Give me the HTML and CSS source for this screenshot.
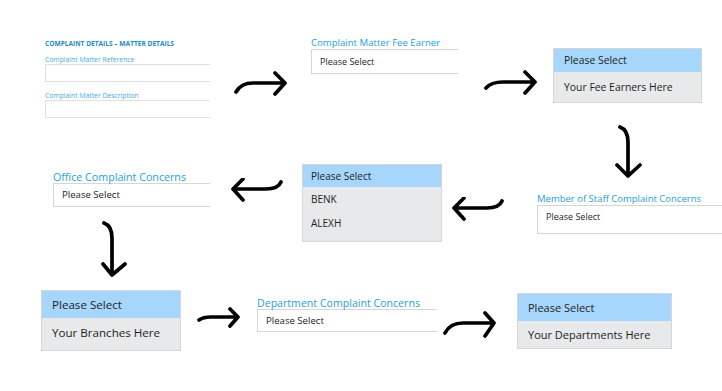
FILE: index.html
```html
<!DOCTYPE html>
<html lang="en">
<head>
  <meta charset="UTF-8" />
  <title>Complaint Concerns Flow</title>
  <link rel="stylesheet" href="styles.css">
</head>
<body>
  <div class="canvas">

    <!-- step 1: matter details -->
    <div class="node matter">
      <div class="matter-title">COMPLAINT DETAILS – MATTER DETAILS</div>
      <div class="matter-label">Complaint Matter Reference</div>
      <div class="matter-box"></div>
      <div class="matter-label">Complaint Matter Description</div>
      <div class="matter-box"></div>
    </div>

    <svg class="arrow a1" width="56" height="28" viewBox="0 0 56 28">
      <path d="M3 22 Q8 13 20 13 L52 13 M42 3 L52 13 L42 24" />
    </svg>

    <div class="node field fee">
      <div class="field-label">Complaint Matter Fee Earner</div>
      <div class="field-box">Please Select</div>
    </div>

    <svg class="arrow a2" width="56" height="28" viewBox="0 0 56 28">
      <path d="M3 19 Q8 13 20 13 L52 13 M42 3 L52 13 L42 24" />
    </svg>

    <div class="node dropdown drop-fee">
      <div class="opt selected">Please Select</div>
      <div class="opt">Your Fee Earners Here</div>
    </div>

    <svg class="arrow a3" width="30" height="58" viewBox="0 0 30 58">
      <path d="M5 3 Q13 6 13 18 L13 52 M2 41 L13 52 L25 41" />
    </svg>

    <!-- step 2: staff -->
    <div class="node field staff">
      <div class="field-label">Member of Staff Complaint Concerns</div>
      <div class="field-box">Please Select</div>
    </div>

    <svg class="arrow a4" width="54" height="26" viewBox="0 0 54 26">
      <path d="M51 4 Q48 11 36 11 L3 11 M13 1 L3 11 L13 22" />
    </svg>

    <div class="node dropdown drop-staff">
      <div class="opt selected">Please Select</div>
      <div class="opt">BENK</div>
      <div class="opt">ALEXH</div>
    </div>

    <svg class="arrow a5" width="54" height="26" viewBox="0 0 54 26">
      <path d="M51 4 Q48 11 36 11 L3 11 M13 1 L3 11 L13 22" />
    </svg>

    <div class="node field office">
      <div class="field-label">Office Complaint Concerns</div>
      <div class="field-box">Please Select</div>
    </div>

    <svg class="arrow a6" width="30" height="58" viewBox="0 0 30 58">
      <path d="M4 2 Q12 5 12 17 L12 54 M3 43 L12 54 L25 43" />
    </svg>

    <!-- step 3: branches and departments -->
    <div class="node dropdown drop-branch">
      <div class="opt selected">Please Select</div>
      <div class="opt">Your Branches Here</div>
    </div>

    <svg class="arrow a7" width="46" height="22" viewBox="0 0 46 22">
      <path d="M2 13 Q6 10 14 10 L41 10 M33 2 L41 10 L33 19" />
    </svg>

    <div class="node field dept">
      <div class="field-label">Department Complaint Concerns</div>
      <div class="field-box">Please Select</div>
    </div>

    <svg class="arrow a8" width="56" height="28" viewBox="0 0 56 28">
      <path d="M2 22 Q7 12 20 12 L51 12 M42 2 L51 12 L42 25" />
    </svg>

    <div class="node dropdown drop-dept">
      <div class="opt selected">Please Select</div>
      <div class="opt">Your Departments Here</div>
    </div>

  </div>
</body>
</html>
```

FILE: styles.css
```css
body {
  margin: 0;
  background: #fff;
  font-family: 'Open Sans', 'Noto Sans', sans-serif;
}
.canvas {
  position: relative;
  width: 722px;
  height: 391px;
  overflow: hidden;
}
.node, .arrow {
  position: absolute;
}

/* arrows */
.arrow path {
  fill: none;
  stroke: #000;
  stroke-width: 3.7;
  stroke-linecap: round;
  stroke-linejoin: round;
}
.a1 { left: 233px; top: 70px; }
.a2 { left: 483px; top: 69px; }
.a3 { left: 615px; top: 124px; }
.a4 { left: 451px; top: 197px; }
.a5 { left: 230px; top: 178px; }
.a6 { left: 100px; top: 221px; }
.a7 { left: 197px; top: 307px; }
.a8 { left: 443px; top: 311px; }

/* matter details panel */
.matter {
  left: 45px;
  top: 39px;
  width: 165px;
}
.matter-title {
  font-size: 6.6px;
  font-weight: 700;
  color: #1a8cc9;
  line-height: 10px;
  margin-bottom: 7px;
}
.matter-label {
  font-size: 6.8px;
  color: #46abdc;
  line-height: 8px;
}
.matter-box {
  height: 16px;
  border: 1px solid #e0e0e0;
  border-right: none;
  margin-bottom: 10px;
}

/* labelled select fields */
.field-label {
  color: #27a0db;
  line-height: 12px;
}
.field-box {
  box-sizing: border-box;
  border: 1px solid #d6d6d6;
  border-right: none;
  color: #1e1e1e;
  padding-left: 8px;
}
.fee {
  left: 311px;
  top: 37px;
  width: 147px;
  font-size: 9.6px;
}
.fee .field-box {
  height: 25px;
  line-height: 23px;
  font-size: 9px;
}
.staff {
  left: 537px;
  top: 193px;
  width: 190px;
  font-size: 9.5px;
}
.staff .field-box {
  height: 29px;
  line-height: 17px;
  padding-top: 2px;
  font-size: 9px;
}
.office {
  left: 53px;
  top: 171px;
  width: 157px;
  font-size: 10.7px;
}
.office .field-box {
  height: 24px;
  line-height: 22px;
  font-size: 9.6px;
}
.dept {
  left: 257px;
  top: 297px;
  width: 180px;
  font-size: 10.6px;
}
.dept .field-box {
  height: 23px;
  line-height: 21px;
  font-size: 9.6px;
}

/* opened dropdown lists */
.dropdown {
  box-sizing: border-box;
  border: 1px solid #d6d6d6;
  background: #e8e9ea;
  color: #1e1e1e;
}
.opt {
  padding-left: 10px;
}
.opt.selected {
  background: #a6d6fb;
}
.drop-fee {
  left: 553px;
  top: 48px;
  width: 149px;
  height: 55px;
  font-size: 10.4px;
}
.drop-fee .opt { line-height: 23px; }
.drop-fee .opt + .opt { line-height: 30px; }

.drop-staff {
  left: 302px;
  top: 164px;
  width: 140px;
  height: 78px;
  font-size: 10px;
}
.drop-staff .opt { line-height: 24px; padding-left: 8px; }
.drop-staff .opt.selected { line-height: 22px; }

.drop-branch {
  left: 41px;
  top: 290px;
  width: 140px;
  height: 61px;
  font-size: 11.6px;
}
.drop-branch .opt { line-height: 27px; }
.drop-branch .opt + .opt { line-height: 30px; }

.drop-dept {
  left: 517px;
  top: 293px;
  width: 155px;
  height: 56px;
  font-size: 11px;
}
.drop-dept .opt { line-height: 27px; }
.drop-dept .opt + .opt { line-height: 28px; }
```
